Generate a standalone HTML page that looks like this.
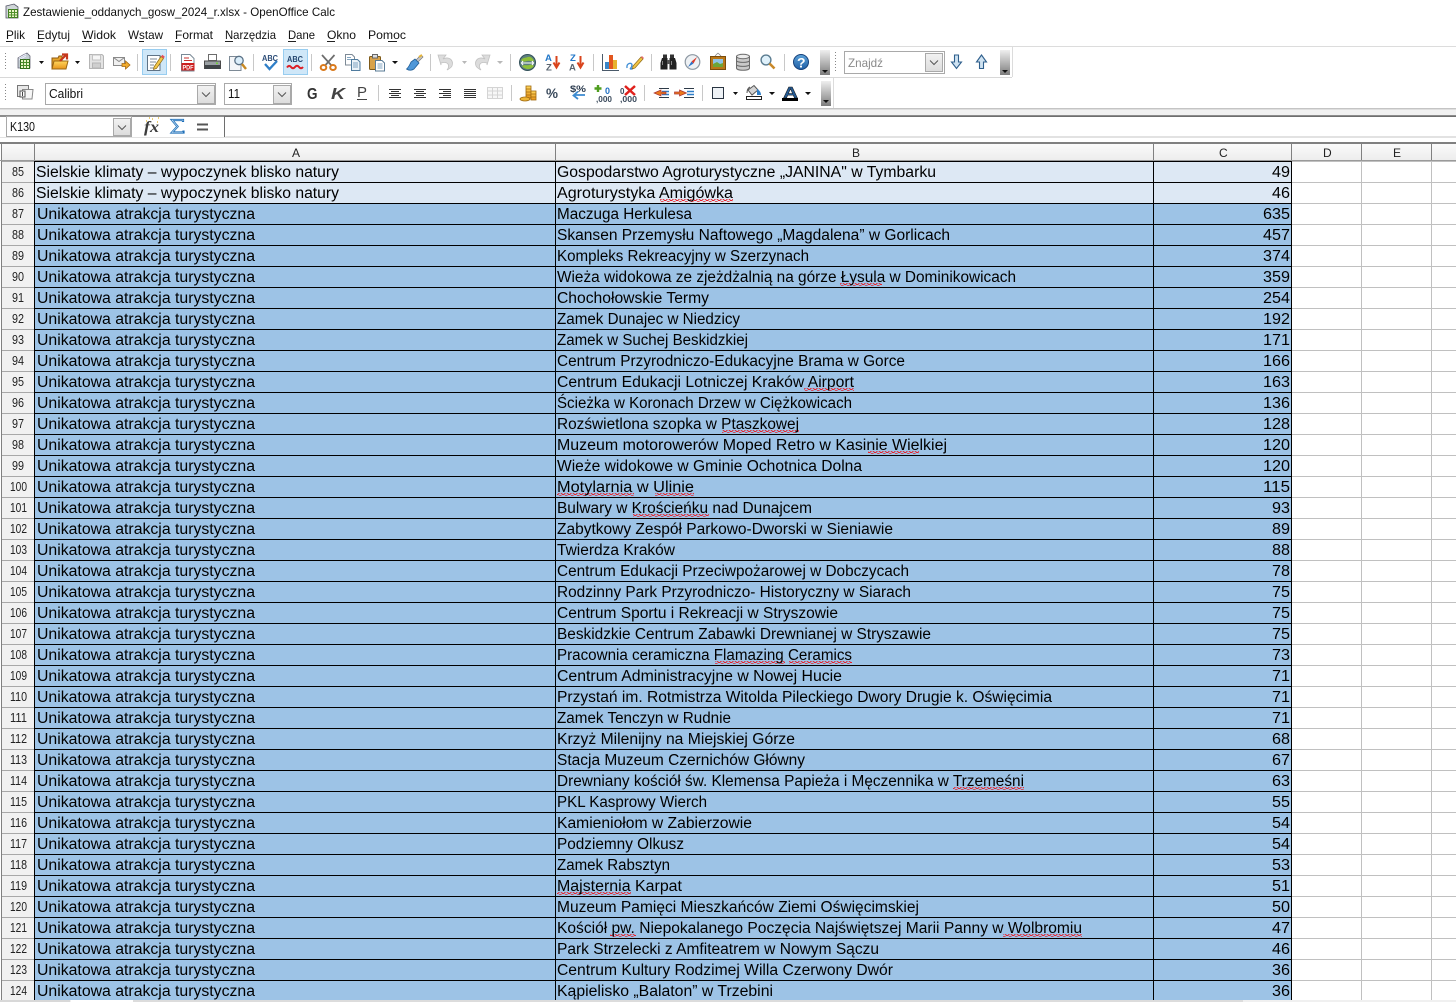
<!DOCTYPE html>
<html lang="pl"><head><meta charset="utf-8"><title>Zestawienie_oddanych_gosw_2024_r.xlsx - OpenOffice Calc</title>
<style>
html,body{margin:0;padding:0;background:#fff;overflow:hidden;width:1456px;height:1002px}
svg{display:block;font-family:"Liberation Sans",sans-serif}
.a,.b,.c{font-size:15.5px;fill:#000}
.n{font-size:13px;fill:#222}
.h{font-size:12px;fill:#222}
.u{font-size:12px;fill:#111}
</style></head><body>
<svg width="1456" height="1002" viewBox="0 0 1456 1002" xmlns="http://www.w3.org/2000/svg">
<defs>
<pattern id="sq" width="6" height="3" patternUnits="userSpaceOnUse"><path d="M0 2.500L1.500 .7L3 .7L4.500 2.500L6 2.500" fill="none" stroke="#e8202a" stroke-width="1"/></pattern>
<linearGradient id="hd" x1="0" y1="0" x2="0" y2="1"><stop offset="0" stop-color="#fafafa"/><stop offset="1" stop-color="#ececec"/></linearGradient>
<linearGradient id="hn" x1="0" y1="0" x2="0" y2="1"><stop offset="0" stop-color="#efefef"/><stop offset="1" stop-color="#7d7d7d"/></linearGradient>
<linearGradient id="gold" x1="0" y1="0" x2="0" y2="1"><stop offset="0" stop-color="#ffd75e"/><stop offset="1" stop-color="#e8951c"/></linearGradient>
<linearGradient id="blu" x1="0" y1="0" x2="0" y2="1"><stop offset="0" stop-color="#5da2d8"/><stop offset="1" stop-color="#1f5fa6"/></linearGradient>
<linearGradient id="btn" x1="0" y1="0" x2="0" y2="1"><stop offset="0" stop-color="#f2f2f2"/><stop offset="1" stop-color="#dcdcdc"/></linearGradient>
</defs>
<rect width="1456" height="1002" fill="#fff"/>

<!-- title bar -->
<g transform="translate(5,3)"><path d="M1 3L9 1L13 4V15H1z" fill="#cfd6d8" stroke="#556" stroke-width=".8"/><rect x="3.500" y="6.500" width="9" height="8" fill="#eaf4c8" stroke="#3f7d20"/><path d="M3.500 9.500H12.500M3.500 12H12.500M6.500 6.500V14.500M9.500 6.500V14.500" stroke="#4f8f2b" fill="none"/></g>
<text class="u" x="23" y="16" textLength="312" lengthAdjust="spacingAndGlyphs">Zestawienie_oddanych_gosw_2024_r.xlsx - OpenOffice Calc</text>

<!-- menu -->
<text class="u" x="6" y="39" textLength="19" lengthAdjust="spacingAndGlyphs">Plik</text>
<text class="u" x="37" y="39" textLength="33" lengthAdjust="spacingAndGlyphs">Edytuj</text>
<text class="u" x="82" y="39" textLength="34" lengthAdjust="spacingAndGlyphs">Widok</text>
<text class="u" x="128" y="39" textLength="35" lengthAdjust="spacingAndGlyphs">Wstaw</text>
<text class="u" x="175" y="39" textLength="38" lengthAdjust="spacingAndGlyphs">Format</text>
<text class="u" x="225" y="39" textLength="51" lengthAdjust="spacingAndGlyphs">Narzędzia</text>
<text class="u" x="288" y="39" textLength="27" lengthAdjust="spacingAndGlyphs">Dane</text>
<text class="u" x="327" y="39" textLength="29" lengthAdjust="spacingAndGlyphs">Okno</text>
<text class="u" x="368" y="39" textLength="38" lengthAdjust="spacingAndGlyphs">Pomoc</text>
<path d="M6 41.500h7M37 41.500h6M82 41.500h10M139 41.500h5M175 41.500h6M225 41.500h8M288 41.500h8M327 41.500h8M388 41.500h9" stroke="#222" shape-rendering="crispEdges"/>

<!-- toolbar frame -->
<g shape-rendering="crispEdges" fill="none">
<path d="M0 46.500H1456" stroke="#dcdcdc"/>
<path d="M0 77.500H1012" stroke="#d8d8d8"/>
<path d="M1012.500 47V77" stroke="#dcdcdc"/>
<path d="M833.500 78V108" stroke="#dcdcdc"/>
<path d="M0 108.500H1456" stroke="#c4c4c4"/>
<path d="M0 109.500H1456" stroke="#dedede"/>
</g>
<rect y="110" width="1456" height="5" fill="#f1f1f1"/>
<rect y="115" width="1456" height="2" fill="#8c8c8c"/>
<path d="M0 137.500H1456" stroke="#e2e2e2" shape-rendering="crispEdges"/>
<rect y="142" width="1456" height="2" fill="#808080"/>

<!-- grips -->
<g stroke="#888" stroke-dasharray="1 2" shape-rendering="crispEdges">
<path d="M5.500 53V71"/><path d="M5.500 84V102"/><path d="M835.500 52V72"/>
</g>

<!-- separators -->
<g stroke="#c8c8c8" shape-rendering="crispEdges">
<path d="M137.500 54V71M170.500 54V71M253.500 54V71M311.500 54V71M430.500 54V71M510.500 54V71M593.500 54V71M651.500 54V71M784.500 54V71"/>
<path d="M378.500 85V101M511.500 85V101M644.500 85V101M702.500 85V101"/>
</g>

<!-- highlighted buttons -->
<rect x="142.500" y="49.500" width="24" height="25" fill="#cfe7f8" stroke="#98cdf0"/>
<rect x="283.500" y="49.500" width="24" height="25" fill="#cfe7f8" stroke="#98cdf0"/>

<!-- dropdown arrows -->
<g fill="#111">
<path d="M39 61h5l-2.500 3zM75 61h5l-2.500 3zM392 61h6l-3 3zM733 92h5l-2.500 3zM769 92h6l-3 3zM805 92h6l-3 3z"/>
</g>
<g fill="#b8b8b8"><path d="M462 61h5l-2.500 3zM497 61h6l-3 3z"/></g>

<!-- new doc -->
<g transform="translate(17,53)"><path d="M1 5L6 2 10 0 13 3V15H1z" fill="#c3cdd2" stroke="#667" stroke-width=".8"/><path d="M2 5L9 1M2 7L9 3" stroke="#eef" stroke-width=".8"/><rect x="3.500" y="6.500" width="9" height="9" fill="#e9f3c5" stroke="#2f6a18"/><path d="M3.500 9.500H12.500M3.500 12.500H12.500M6.500 6.500V15.500M9.500 6.500V15.500" stroke="#4a8a28"/></g>
<!-- open -->
<g transform="translate(51,53)"><path d="M1 5H7L8 3H11V15H1z" fill="#e6a52b" stroke="#8f5a10"/><path d="M1 16L3 8H17L15 16z" fill="url(#gold)" stroke="#9a6512"/><path d="M9 8L15 2M11 1.500H16V6.500" fill="none" stroke="#c6371d" stroke-width="2.200"/></g>
<!-- save (disabled) -->
<g transform="translate(89,54)"><path d="M.5.500H13L14.500 2V14.500H.5z" fill="#e3e3e3" stroke="#b5b5b5"/><rect x="3.500" y="1" width="8" height="5" fill="#f6f6f6" stroke="#c2c2c2"/><rect x="3.500" y="9" width="8" height="5" fill="#cfcfcf" stroke="#b5b5b5"/></g>
<!-- mail -->
<g transform="translate(113,57)"><rect x=".5" y=".5" width="11" height="8" fill="#f0f0f0" stroke="#8a8a8a"/><path d="M.5.500L6 4.500L11.500.5" fill="none" stroke="#8a8a8a"/><path d="M9 6.500H12.500V4L17 8L12.500 12V9.500H9z" fill="#f2ac2e" stroke="#a66a12" stroke-width=".8"/></g>
<!-- edit -->
<g transform="translate(147,53)"><path d="M.5 2.500H13V17.500H.5z" fill="#fff" stroke="#5f7386"/><path d="M3 6H10M3 9H9M3 12H7M3 15H7" stroke="#7d8a96"/><path d="M7 14L14 3.500L16.500 5.500L9.500 15.500L6.500 16.500z" fill="#f4c84a" stroke="#8b6914" stroke-width=".7"/><path d="M14 3.500L15.300 1.700L17.800 3.700L16.500 5.500z" fill="#e8505a"/></g>
<!-- pdf -->
<g transform="translate(181,54)"><path d="M.5.500H9L13 4.500V17H.5z" fill="#fff" stroke="#7a8a96"/><path d="M3 4H8M3 6.500H11" stroke="#c9302c"/><rect x=".5" y="9" width="13" height="7.500" fill="#cc1f1f"/><text x="1.500" y="15.300" font-size="6.500" font-weight="bold" fill="#fff" textLength="11" lengthAdjust="spacingAndGlyphs">PDF</text></g>
<!-- print -->
<g transform="translate(204,54)"><rect x="4.500" y=".5" width="8" height="6" fill="#fff" stroke="#6c6c6c"/><path d="M.5 7H16.500V14.500H.5z" fill="#9aa0a4" stroke="#4a4a4a"/><rect x="1" y="11" width="15" height="4" fill="#3f4448"/><rect x="12" y="8.500" width="2" height="1.500" fill="#6fcf3a"/></g>
<!-- preview -->
<g transform="translate(229,54)"><path d="M.5 2.500H9L12 5.500V16.500H.5z" fill="#f4f6f8" stroke="#7d8a96"/><circle cx="10" cy="6.500" r="4.200" fill="#dbeefa" stroke="#5a7186" stroke-width="1.300"/><path d="M13 10L17 15" stroke="#c98a23" stroke-width="2.400"/></g>
<!-- spell -->
<g transform="translate(262,53)"><text x="0" y="7.800" font-size="8.500" font-weight="bold" fill="#2c4d78" textLength="16" lengthAdjust="spacingAndGlyphs">ABC</text><path d="M3 11L7.500 16L15 8" fill="none" stroke="#2f7fc8" stroke-width="2.300"/></g>
<!-- autospell -->
<g transform="translate(287,54)"><text x="0" y="8" font-size="8.500" font-weight="bold" fill="#24466f" textLength="16" lengthAdjust="spacingAndGlyphs">ABC</text><path d="M0 13.500Q2 10.500 4 13Q6 15.500 8 13Q10 10.500 12 13Q14 15.500 16 13" fill="none" stroke="#dc1f26" stroke-width="2"/></g>
<!-- scissors -->
<g transform="translate(320,54)" fill="none"><path d="M2 1L11 11M14.500 1L5.500 11" stroke="#6d6d6d" stroke-width="1.700"/><ellipse cx="3.500" cy="13.500" rx="2.800" ry="2.500" stroke="#d9791b" stroke-width="2"/><ellipse cx="13" cy="13.500" rx="2.800" ry="2.500" stroke="#d9791b" stroke-width="2"/></g>
<!-- copy -->
<g transform="translate(345,54)"><path d="M.5.500H7L9.500 3V11H.5z" fill="#fff" stroke="#7d8a96"/><path d="M6.500 5.500H12.500L15 8V16.500H6.500z" fill="#eaf2f8" stroke="#4f7b9e"/><path d="M8 9H13M8 11H13M8 13H13M2 3.500H6M2 5.500H6" stroke="#5a88ad" stroke-width=".8"/></g>
<!-- paste -->
<g transform="translate(369,54)"><rect x=".5" y="2.500" width="11" height="13" rx="1" fill="#d8a24a" stroke="#7f5a18"/><rect x="3.500" y=".5" width="5" height="3.500" fill="#ddd" stroke="#666"/><path d="M6.500 6.500H13L15.500 9V17H6.500z" fill="#fff" stroke="#5a7b96"/><path d="M8.500 10H13.500M8.500 12H13.500M8.500 14H13.500" stroke="#5a88ad" stroke-width=".8"/></g>
<!-- brush -->
<g transform="translate(406,54)"><path d="M10 6L15 1L17 3L12 8z" fill="#c7c7c7" stroke="#777" stroke-width=".7"/><path d="M9 5L13 9L8 15C5 17 2 16 .5 15C3 13 4 10 5 8z" fill="#4f97d8" stroke="#1e5c96" stroke-width=".8"/><path d="M13 3L16 1" stroke="#e4b43a" stroke-width="2"/></g>
<!-- undo/redo disabled -->
<path d="M438 55L446 55L443 59C449 56 454 60 452 66C451 68 449 69 447 70C450 66 449 61 441 63V65z" fill="#dcdcdc" stroke="#c2c2c2" stroke-width=".8"/>
<path d="M490 55L482 55L485 59C479 56 474 60 476 66C477 68 479 69 481 70C478 66 479 61 487 63V65z" fill="#dcdcdc" stroke="#c2c2c2" stroke-width=".8"/>
<!-- navigator globe -->
<g transform="translate(519,54)"><circle cx="8.500" cy="8.500" r="8" fill="#5d7f7d" stroke="#34525a"/><path d="M2 6C5 3 7 4 9 3S14 4 15 7C12 8 11 6 8 7S3 8 2 6z" fill="#8fc038"/><path d="M3 12C6 10 8 12 10 11S14 11 15 12C12 16 6 16 3 12z" fill="#8fc038"/><path d="M3.500 9H14M4 11L2.500 9L4 7M13 11L14.500 9L13 7" fill="none" stroke="#fff" stroke-width="1.100"/></g>
<!-- sort AZ -->
<g transform="translate(545,53)"><text x="0" y="8" font-size="9.500" font-weight="bold" fill="#2277c9">A</text><text x="1" y="17.500" font-size="9.500" font-weight="bold" fill="#5a6470">Z</text><path d="M11.500 3V13M8.500 9.500L11.500 14.500L14.500 9.500" fill="none" stroke="#d9441d" stroke-width="2"/></g>
<g transform="translate(569,53)"><text x="1" y="8" font-size="9.500" font-weight="bold" fill="#2277c9">Z</text><text x="0" y="17.500" font-size="9.500" font-weight="bold" fill="#5a6470">A</text><path d="M11.500 3V13M8.500 9.500L11.500 14.500L14.500 9.500" fill="none" stroke="#d9441d" stroke-width="2"/></g>
<!-- chart -->
<g transform="translate(602,53)"><path d="M.5 1V17.500H17" fill="none" stroke="#4a5a6a"/><rect x="3" y="9" width="4" height="7" fill="#3a86c8"/><rect x="7" y="2" width="4" height="14" fill="#e2561e"/><rect x="11" y="7" width="4" height="9" fill="#e8b22c"/></g>
<!-- draw -->
<g transform="translate(626,54)"><path d="M1 14C0 9 6 8 6 11S3 15 5 15 9 12 9 11" fill="none" stroke="#3f8ed6" stroke-width="1.400"/><path d="M7 12L15 3L17 5L9 14L6.500 15z" fill="#f1c445" stroke="#8b6914" stroke-width=".7"/><path d="M15 3L16 2L18 4L17 5z" fill="#e86a70"/></g>
<!-- binoculars -->
<g transform="translate(660,54)"><rect x="3" y=".5" width="4" height="4" fill="#333"/><rect x="10" y=".5" width="4" height="4" fill="#333"/><path d="M2 4H7.500V15.500H.5V9z" fill="#222"/><path d="M9.500 4H15L16.500 9V15.500H9.500z" fill="#222"/><rect x="7" y="6" width="3" height="4" fill="#555"/><path d="M2.500 7V11M11.500 7V11" stroke="#888"/></g>
<!-- compass -->
<g transform="translate(685,54)"><circle cx="7.500" cy="8" r="7.300" fill="#eef1f4" stroke="#8c97a2" stroke-width="1.200"/><path d="M12 3L8.500 9.500L6.500 7.500z" fill="#d93a2b"/><path d="M3 13L6.500 7.500L8.500 9.500z" fill="#2d72c4"/></g>
<!-- gallery -->
<g transform="translate(710,53)"><path d="M8 0L5 3M8 0L11 3" stroke="#888" fill="none" stroke-width=".8"/><rect x=".5" y="3.500" width="15" height="13" fill="#b97718" stroke="#7a4c0c"/><rect x="3" y="6" width="10" height="8" fill="#8fc4e8"/><path d="M3 14V11L7 9L10 11L13 10V14z" fill="#6ea536"/></g>
<!-- database -->
<g transform="translate(736,54)"><path d="M.5 2.500V14C.5 17 13.500 17 13.500 14V2.500z" fill="#c9c9c9" stroke="#6a6a6a"/><ellipse cx="7" cy="2.500" rx="6.500" ry="2.200" fill="#ececec" stroke="#6a6a6a"/><path d="M.5 6.500C.5 9 13.500 9 13.500 6.500M.5 10.500C.5 13 13.500 13 13.500 10.500" fill="none" stroke="#6a6a6a"/></g>
<!-- zoom -->
<g transform="translate(760,54)"><circle cx="6" cy="6" r="4.900" fill="#dff1fb" stroke="#5b7c90" stroke-width="1.400"/><path d="M9.500 9.500L14.500 14.500" stroke="#c9892a" stroke-width="2.600"/></g>
<!-- help -->
<circle cx="801" cy="62" r="7.500" fill="url(#blu)" stroke="#16407a"/>
<text x="797" y="67.500" font-size="14" font-weight="bold" fill="#fff">?</text>

<!-- handles -->
<g>
<rect x="820" y="50" width="10" height="25" fill="url(#hn)"/><path d="M822 70h6l-3 3z" fill="#111"/>
<rect x="821" y="81" width="10" height="25" fill="url(#hn)"/><path d="M823 100h6l-3 3z" fill="#111"/>
<rect x="1000" y="50" width="10" height="25" fill="url(#hn)"/><path d="M1002 70h6l-3 3z" fill="#111"/>
</g>

<!-- find box -->
<rect x="844.500" y="51.500" width="100" height="22" fill="#fff" stroke="#a9a9a9"/>
<text x="848" y="67" font-size="12" fill="#8a8a8a" textLength="35" lengthAdjust="spacingAndGlyphs">Znajdź</text>
<rect x="925.500" y="53.500" width="17" height="18" fill="url(#btn)" stroke="#a9a9a9"/>
<path d="M930 60.500L934 64.500L938 60.500" fill="none" stroke="#555"/>
<path d="M954.500 55H958.500V62H961.500L956.500 68.500L951.500 62H954.500z" fill="#cfe2f1" stroke="#2f5f8c" stroke-width="1.100"/>
<path d="M979.500 68.500H983.500V62H986.500L981.500 55L976.500 62H979.500z" fill="#cfe2f1" stroke="#2f5f8c" stroke-width="1.100"/>

<!-- formatting -->
<g transform="translate(17,85)"><rect x=".5" y=".5" width="11" height="11" fill="#e8e8e8" stroke="#777"/><path d="M5.500 4.500H16L15 14H5.500z" fill="#f6f6f6" stroke="#888"/><rect x="3" y="6" width="5" height="6" fill="#fff" stroke="#555"/><path d="M5.500 7V11" stroke="#444"/></g>

<rect x="45.500" y="83.500" width="170" height="21" fill="#fff" stroke="#a9a9a9"/>
<text x="49" y="98" font-size="12.500" fill="#111" textLength="34" lengthAdjust="spacingAndGlyphs">Calibri</text>
<rect x="197.500" y="85.500" width="17" height="18" fill="url(#btn)" stroke="#a9a9a9"/>
<path d="M202 92.500L206 96.500L210 92.500" fill="none" stroke="#555"/>
<rect x="224.500" y="83.500" width="67" height="21" fill="#fff" stroke="#a9a9a9"/>
<text x="228" y="98" font-size="12.500" fill="#111" textLength="12" lengthAdjust="spacingAndGlyphs">11</text>
<rect x="273.500" y="85.500" width="17" height="18" fill="url(#btn)" stroke="#a9a9a9"/>
<path d="M278 92.500L282 96.500L286 92.500" fill="none" stroke="#555"/>

<text x="307" y="99" font-size="16" font-weight="bold" fill="#333" textLength="10.500" lengthAdjust="spacingAndGlyphs">G</text>
<text x="331" y="99" font-size="16" font-weight="bold" font-style="italic" fill="#444" textLength="14" lengthAdjust="spacingAndGlyphs">K</text>
<text x="357" y="97" font-size="15" fill="#444" textLength="10" lengthAdjust="spacingAndGlyphs">P</text>
<path d="M357 99.500H367" stroke="#444" shape-rendering="crispEdges"/>

<!-- align -->
<g stroke="#333" shape-rendering="crispEdges">
<path d="M389 89.500H401M391 91.500H399M389 93.500H401M391 95.500H399M389 97.500H401"/>
<path d="M414 89.500H426M416 91.500H424M414 93.500H426M416 95.500H424M414 97.500H426"/>
<path d="M439 89.500H451M443 91.500H451M439 93.500H451M443 95.500H451M439 97.500H451"/>
<path d="M464 89.500H476M464 91.500H476M464 93.500H476M464 95.500H476M464 97.500H476"/>
</g>
<g stroke="#d4d4d4" fill="#f7f7f7" shape-rendering="crispEdges"><rect x="487.500" y="87.500" width="15" height="11"/><path d="M487.500 91H503M487.500 95H503M492.500 87.500V99M497.500 87.500V99" fill="none"/></g>

<!-- coins -->
<g transform="translate(520,85)"><rect x="6" y="1" width="5" height="12" fill="url(#gold)" stroke="#a06a10" stroke-width=".8"/><path d="M6 4H11M6 7H11M6 10H11" stroke="#a06a10" stroke-width=".7"/><rect x="11" y="6" width="5" height="9" fill="url(#gold)" stroke="#a06a10" stroke-width=".8"/><path d="M11 9H16M11 12H16" stroke="#a06a10" stroke-width=".7"/><ellipse cx="5" cy="14" rx="5" ry="2" fill="#eeb73a" stroke="#a06a10" stroke-width=".8"/></g>
<text x="546" y="98" font-size="14" font-weight="bold" fill="#3a4a5c" textLength="12" lengthAdjust="spacingAndGlyphs">%</text>
<text x="570" y="92" font-size="9.500" font-weight="bold" fill="#2d3d50" textLength="16" lengthAdjust="spacingAndGlyphs">$%</text>
<path d="M585 95H575M578 91.500L573.500 95.500L578 99" fill="none" stroke="#3b8ad0" stroke-width="1.800"/>
<path d="M598 85V92M594.500 88.500H601.500" stroke="#4f9e1f" stroke-width="2.400"/>
<text x="605" y="94" font-size="9" font-weight="bold" fill="#1e6ec2">0</text>
<text x="596" y="102" font-size="8" font-weight="bold" fill="#3b4a5c" textLength="16" lengthAdjust="spacingAndGlyphs">,000</text>
<path d="M625 86L635 95M635 86L625 95" stroke="#e0201c" stroke-width="2.500"/>
<text x="620" y="94" font-size="8" font-weight="bold" fill="#3b4a5c">0</text>
<text x="620" y="102" font-size="8" font-weight="bold" fill="#3b4a5c" textLength="17" lengthAdjust="spacingAndGlyphs">,000</text>

<!-- indent -->
<g shape-rendering="crispEdges" stroke="#2d3a48"><path d="M659 88.500H669M659 97.500H669M684 88.500H694M684 97.500H694"/></g>
<path d="M662 91.500H669M662 94.500H669M687 91.500H694M687 94.500H694" stroke="#2e7fc9" stroke-width="1.500"/>
<path d="M661 90L654 93L661 96V94H666V92H661z" fill="#ec7a1d" stroke="#a33" stroke-width=".7"/>
<path d="M680 90L687 93L680 96V94H675V92H680z" transform="translate(-.5,0)" fill="#ec7a1d" stroke="#a33" stroke-width=".7"/>

<!-- borders -->
<rect x="712.500" y="87.500" width="11" height="11" fill="#eef2f6" stroke="#2a3542"/>
<!-- fill -->
<g transform="translate(746,85)"><path d="M2 5L8 .5L12 5L6 10z" fill="#d4d4d4" stroke="#555"/><path d="M4 2C2 3 1 5 1 8" fill="none" stroke="#555"/><path d="M11 4C13 5 15 7 15 10H11z" fill="#2f7fc8"/><rect x=".5" y="11.500" width="15" height="3" fill="#fff" stroke="#222"/></g>
<!-- font color -->
<text x="783" y="98" font-size="16" font-weight="bold" fill="#255a92" stroke="#111" stroke-width=".4" textLength="15" lengthAdjust="spacingAndGlyphs">A</text>
<rect x="782" y="98" width="16" height="3" fill="#000"/>

<!-- formula bar -->
<rect x="6.500" y="116.500" width="125" height="20" fill="#fff" stroke="#a9a9a9"/>
<text x="10" y="131" font-size="12.500" fill="#111" textLength="25" lengthAdjust="spacingAndGlyphs">K130</text>
<rect x="113.500" y="118.500" width="17" height="17" fill="url(#btn)" stroke="#a9a9a9"/>
<path d="M118 125.500L122 129.500L126 125.500" fill="none" stroke="#555"/>
<text x="144" y="132" font-size="16" font-weight="bold" font-style="italic" font-family="Liberation Serif" fill="#3c3c3c" textLength="15" lengthAdjust="spacingAndGlyphs">fx</text>
<path d="M146 121h1M152 119h1M157 122h1M158 118h1M149 118h1" stroke="#e0b020" stroke-width="1.300"/>
<path d="M183 122V120H172L177.500 126.500L172 132.500H183.500V130.500" fill="none" stroke="#1f6fb8" stroke-width="2.200"/>
<path d="M183 121V120H172L177.500 126.500L172 132.500H183" fill="none" stroke="#cfe6f8" stroke-width=".6"/>
<path d="M197 124.500H208M197 129.500H208" stroke="#555" stroke-width="1.600" shape-rendering="crispEdges"/>
<path d="M224.500 137V116.500H1456" fill="none" stroke="#6e6e6e" shape-rendering="crispEdges"/>
<path d="M225.500 136.500H1456" stroke="#e2e2e2" shape-rendering="crispEdges"/>

<!-- sheet -->
<rect x="1" y="144" width="1455" height="17" fill="url(#hd)"/>
<rect x="1" y="161" width="33" height="839" fill="#f1f1f1"/>
<rect x="35" y="162" width="1256" height="41" fill="#dde8f4"/>
<rect x="35" y="203" width="1256" height="797" fill="#9dc3e6"/>

<g shape-rendering="crispEdges" fill="none">
<path stroke="#a8a8a8" d="M1 161.500H34M1 182.500H34M1 203.500H34M1 224.500H34M1 245.500H34M1 266.500H34M1 287.500H34M1 308.500H34M1 329.500H34M1 350.500H34M1 371.500H34M1 392.500H34M1 413.500H34M1 434.500H34M1 455.500H34M1 476.500H34M1 497.500H34M1 518.500H34M1 539.500H34M1 560.500H34M1 581.500H34M1 602.500H34M1 623.500H34M1 644.500H34M1 665.500H34M1 686.500H34M1 707.500H34M1 728.500H34M1 749.500H34M1 770.500H34M1 791.500H34M1 812.500H34M1 833.500H34M1 854.500H34M1 875.500H34M1 896.500H34M1 917.500H34M1 938.500H34M1 959.500H34M1 980.500H34"/>
<path stroke="#000" d="M34 161.500H1292M34 182.500H1292M34 203.500H1292M34 224.500H1292M34 245.500H1292M34 266.500H1292M34 287.500H1292M34 308.500H1292M34 329.500H1292M34 350.500H1292M34 371.500H1292M34 392.500H1292M34 413.500H1292M34 434.500H1292M34 455.500H1292M34 476.500H1292M34 497.500H1292M34 518.500H1292M34 539.500H1292M34 560.500H1292M34 581.500H1292M34 602.500H1292M34 623.500H1292M34 644.500H1292M34 665.500H1292M34 686.500H1292M34 707.500H1292M34 728.500H1292M34 749.500H1292M34 770.500H1292M34 791.500H1292M34 812.500H1292M34 833.500H1292M34 854.500H1292M34 875.500H1292M34 896.500H1292M34 917.500H1292M34 938.500H1292M34 959.500H1292M34 980.500H1292"/>
<path stroke="#c0c0c0" d="M1292 161.500H1456M1292 182.500H1456M1292 203.500H1456M1292 224.500H1456M1292 245.500H1456M1292 266.500H1456M1292 287.500H1456M1292 308.500H1456M1292 329.500H1456M1292 350.500H1456M1292 371.500H1456M1292 392.500H1456M1292 413.500H1456M1292 434.500H1456M1292 455.500H1456M1292 476.500H1456M1292 497.500H1456M1292 518.500H1456M1292 539.500H1456M1292 560.500H1456M1292 581.500H1456M1292 602.500H1456M1292 623.500H1456M1292 644.500H1456M1292 665.500H1456M1292 686.500H1456M1292 707.500H1456M1292 728.500H1456M1292 749.500H1456M1292 770.500H1456M1292 791.500H1456M1292 812.500H1456M1292 833.500H1456M1292 854.500H1456M1292 875.500H1456M1292 896.500H1456M1292 917.500H1456M1292 938.500H1456M1292 959.500H1456M1292 980.500H1456"/>
<path stroke="#000" d="M34.500 161V1000M555.500 161V1000M1153.500 161V1000M1291.500 161V1000"/>
<path stroke="#c0c0c0" d="M1361.500 161V1000M1431.500 161V1000"/>
<path stroke="#808080" d="M34.500 144V161M555.500 144V161M1153.500 144V161M1291.500 144V161M1361.500 144V161M1431.500 144V161"/>
<path stroke="#808080" d="M1.500 143V1000"/>
<path stroke="#9a9a9a" d="M0 160.500H1456"/>
</g>

<!-- col headers -->
<text class="h" x="292" y="157">A</text><text class="h" x="852" y="157">B</text><text class="h" x="1219" y="157">C</text><text class="h" x="1323" y="157">D</text><text class="h" x="1393" y="157">E</text>

<!-- squiggles -->
<g fill="url(#sq)">
<rect x="660" y="199" width="73" height="3"/>
<rect x="840" y="283" width="42" height="3"/>
<rect x="804" y="388" width="50" height="3"/>
<rect x="722" y="430" width="77" height="3"/>
<rect x="868" y="451" width="51" height="3"/>
<rect x="557" y="493" width="77" height="3"/>
<rect x="655" y="493" width="39" height="3"/>
<rect x="633" y="514" width="76" height="3"/>
<rect x="715" y="661" width="70" height="3"/>
<rect x="789" y="661" width="63" height="3"/>
<rect x="953" y="787" width="71" height="3"/>
<rect x="557" y="892" width="74" height="3"/>
<rect x="610" y="934" width="26" height="3"/>
<rect x="1003" y="934" width="79" height="3"/>
</g>

<!-- rows -->
<text class="n" x="12" y="176" textLength="12" lengthAdjust="spacingAndGlyphs">85</text><text class="a" x="36" y="177" textLength="303" lengthAdjust="spacingAndGlyphs">Sielskie klimaty – wypoczynek blisko natury</text><text class="b" x="557" y="177" textLength="379" lengthAdjust="spacingAndGlyphs">Gospodarstwo Agroturystyczne „JANINA" w Tymbarku</text><text class="c" x="1272" y="177" textLength="18" lengthAdjust="spacingAndGlyphs">49</text>
<text class="n" x="12" y="197" textLength="12" lengthAdjust="spacingAndGlyphs">86</text><text class="a" x="36" y="198" textLength="303" lengthAdjust="spacingAndGlyphs">Sielskie klimaty – wypoczynek blisko natury</text><text class="b" x="557" y="198" textLength="176" lengthAdjust="spacingAndGlyphs">Agroturystyka Amigówka</text><text class="c" x="1272" y="198" textLength="18" lengthAdjust="spacingAndGlyphs">46</text>
<text class="n" x="12" y="218" textLength="12" lengthAdjust="spacingAndGlyphs">87</text><text class="a" x="37" y="219" textLength="218" lengthAdjust="spacingAndGlyphs">Unikatowa atrakcja turystyczna</text><text class="b" x="557" y="219" textLength="135" lengthAdjust="spacingAndGlyphs">Maczuga Herkulesa</text><text class="c" x="1263" y="219" textLength="27" lengthAdjust="spacingAndGlyphs">635</text>
<text class="n" x="12" y="239" textLength="12" lengthAdjust="spacingAndGlyphs">88</text><text class="a" x="37" y="240" textLength="218" lengthAdjust="spacingAndGlyphs">Unikatowa atrakcja turystyczna</text><text class="b" x="557" y="240" textLength="393" lengthAdjust="spacingAndGlyphs">Skansen Przemysłu Naftowego „Magdalena” w Gorlicach</text><text class="c" x="1263" y="240" textLength="27" lengthAdjust="spacingAndGlyphs">457</text>
<text class="n" x="12" y="260" textLength="12" lengthAdjust="spacingAndGlyphs">89</text><text class="a" x="37" y="261" textLength="218" lengthAdjust="spacingAndGlyphs">Unikatowa atrakcja turystyczna</text><text class="b" x="557" y="261" textLength="252" lengthAdjust="spacingAndGlyphs">Kompleks Rekreacyjny w Szerzynach</text><text class="c" x="1263" y="261" textLength="27" lengthAdjust="spacingAndGlyphs">374</text>
<text class="n" x="12" y="281" textLength="12" lengthAdjust="spacingAndGlyphs">90</text><text class="a" x="37" y="282" textLength="218" lengthAdjust="spacingAndGlyphs">Unikatowa atrakcja turystyczna</text><text class="b" x="557" y="282" textLength="459" lengthAdjust="spacingAndGlyphs">Wieża widokowa ze zjeżdżalnią na górze Łysula w Dominikowicach</text><text class="c" x="1263" y="282" textLength="27" lengthAdjust="spacingAndGlyphs">359</text>
<text class="n" x="12" y="302" textLength="12" lengthAdjust="spacingAndGlyphs">91</text><text class="a" x="37" y="303" textLength="218" lengthAdjust="spacingAndGlyphs">Unikatowa atrakcja turystyczna</text><text class="b" x="557" y="303" textLength="152" lengthAdjust="spacingAndGlyphs">Chochołowskie Termy</text><text class="c" x="1263" y="303" textLength="27" lengthAdjust="spacingAndGlyphs">254</text>
<text class="n" x="12" y="323" textLength="12" lengthAdjust="spacingAndGlyphs">92</text><text class="a" x="37" y="324" textLength="218" lengthAdjust="spacingAndGlyphs">Unikatowa atrakcja turystyczna</text><text class="b" x="557" y="324" textLength="183" lengthAdjust="spacingAndGlyphs">Zamek Dunajec w Niedzicy</text><text class="c" x="1263" y="324" textLength="27" lengthAdjust="spacingAndGlyphs">192</text>
<text class="n" x="12" y="344" textLength="12" lengthAdjust="spacingAndGlyphs">93</text><text class="a" x="37" y="345" textLength="218" lengthAdjust="spacingAndGlyphs">Unikatowa atrakcja turystyczna</text><text class="b" x="557" y="345" textLength="191" lengthAdjust="spacingAndGlyphs">Zamek w Suchej Beskidzkiej</text><text class="c" x="1263" y="345" textLength="27" lengthAdjust="spacingAndGlyphs">171</text>
<text class="n" x="12" y="365" textLength="12" lengthAdjust="spacingAndGlyphs">94</text><text class="a" x="37" y="366" textLength="218" lengthAdjust="spacingAndGlyphs">Unikatowa atrakcja turystyczna</text><text class="b" x="557" y="366" textLength="348" lengthAdjust="spacingAndGlyphs">Centrum Przyrodniczo-Edukacyjne Brama w Gorce</text><text class="c" x="1263" y="366" textLength="27" lengthAdjust="spacingAndGlyphs">166</text>
<text class="n" x="12" y="386" textLength="12" lengthAdjust="spacingAndGlyphs">95</text><text class="a" x="37" y="387" textLength="218" lengthAdjust="spacingAndGlyphs">Unikatowa atrakcja turystyczna</text><text class="b" x="557" y="387" textLength="297" lengthAdjust="spacingAndGlyphs">Centrum Edukacji Lotniczej Kraków Airport</text><text class="c" x="1263" y="387" textLength="27" lengthAdjust="spacingAndGlyphs">163</text>
<text class="n" x="12" y="407" textLength="12" lengthAdjust="spacingAndGlyphs">96</text><text class="a" x="37" y="408" textLength="218" lengthAdjust="spacingAndGlyphs">Unikatowa atrakcja turystyczna</text><text class="b" x="557" y="408" textLength="295" lengthAdjust="spacingAndGlyphs">Ścieżka w Koronach Drzew w Ciężkowicach</text><text class="c" x="1263" y="408" textLength="27" lengthAdjust="spacingAndGlyphs">136</text>
<text class="n" x="12" y="428" textLength="12" lengthAdjust="spacingAndGlyphs">97</text><text class="a" x="37" y="429" textLength="218" lengthAdjust="spacingAndGlyphs">Unikatowa atrakcja turystyczna</text><text class="b" x="557" y="429" textLength="242" lengthAdjust="spacingAndGlyphs">Rozświetlona szopka w Ptaszkowej</text><text class="c" x="1263" y="429" textLength="27" lengthAdjust="spacingAndGlyphs">128</text>
<text class="n" x="12" y="449" textLength="12" lengthAdjust="spacingAndGlyphs">98</text><text class="a" x="37" y="450" textLength="218" lengthAdjust="spacingAndGlyphs">Unikatowa atrakcja turystyczna</text><text class="b" x="557" y="450" textLength="390" lengthAdjust="spacingAndGlyphs">Muzeum motorowerów Moped Retro w Kasinie Wielkiej</text><text class="c" x="1263" y="450" textLength="27" lengthAdjust="spacingAndGlyphs">120</text>
<text class="n" x="12" y="470" textLength="12" lengthAdjust="spacingAndGlyphs">99</text><text class="a" x="37" y="471" textLength="218" lengthAdjust="spacingAndGlyphs">Unikatowa atrakcja turystyczna</text><text class="b" x="557" y="471" textLength="305" lengthAdjust="spacingAndGlyphs">Wieże widokowe w Gminie Ochotnica Dolna</text><text class="c" x="1263" y="471" textLength="27" lengthAdjust="spacingAndGlyphs">120</text>
<text class="n" x="10" y="491" textLength="17" lengthAdjust="spacingAndGlyphs">100</text><text class="a" x="37" y="492" textLength="218" lengthAdjust="spacingAndGlyphs">Unikatowa atrakcja turystyczna</text><text class="b" x="557" y="492" textLength="137" lengthAdjust="spacingAndGlyphs">Motylarnia w Ulinie</text><text class="c" x="1263" y="492" textLength="27" lengthAdjust="spacingAndGlyphs">115</text>
<text class="n" x="10" y="512" textLength="17" lengthAdjust="spacingAndGlyphs">101</text><text class="a" x="37" y="513" textLength="218" lengthAdjust="spacingAndGlyphs">Unikatowa atrakcja turystyczna</text><text class="b" x="557" y="513" textLength="255" lengthAdjust="spacingAndGlyphs">Bulwary w Krościeńku nad Dunajcem</text><text class="c" x="1272" y="513" textLength="18" lengthAdjust="spacingAndGlyphs">93</text>
<text class="n" x="10" y="533" textLength="17" lengthAdjust="spacingAndGlyphs">102</text><text class="a" x="37" y="534" textLength="218" lengthAdjust="spacingAndGlyphs">Unikatowa atrakcja turystyczna</text><text class="b" x="557" y="534" textLength="336" lengthAdjust="spacingAndGlyphs">Zabytkowy Zespół Parkowo-Dworski w Sieniawie</text><text class="c" x="1272" y="534" textLength="18" lengthAdjust="spacingAndGlyphs">89</text>
<text class="n" x="10" y="554" textLength="17" lengthAdjust="spacingAndGlyphs">103</text><text class="a" x="37" y="555" textLength="218" lengthAdjust="spacingAndGlyphs">Unikatowa atrakcja turystyczna</text><text class="b" x="557" y="555" textLength="118" lengthAdjust="spacingAndGlyphs">Twierdza Kraków</text><text class="c" x="1272" y="555" textLength="18" lengthAdjust="spacingAndGlyphs">88</text>
<text class="n" x="10" y="575" textLength="17" lengthAdjust="spacingAndGlyphs">104</text><text class="a" x="37" y="576" textLength="218" lengthAdjust="spacingAndGlyphs">Unikatowa atrakcja turystyczna</text><text class="b" x="557" y="576" textLength="352" lengthAdjust="spacingAndGlyphs">Centrum Edukacji Przeciwpożarowej w Dobczycach</text><text class="c" x="1272" y="576" textLength="18" lengthAdjust="spacingAndGlyphs">78</text>
<text class="n" x="10" y="596" textLength="17" lengthAdjust="spacingAndGlyphs">105</text><text class="a" x="37" y="597" textLength="218" lengthAdjust="spacingAndGlyphs">Unikatowa atrakcja turystyczna</text><text class="b" x="557" y="597" textLength="354" lengthAdjust="spacingAndGlyphs">Rodzinny Park Przyrodniczo- Historyczny w Siarach</text><text class="c" x="1272" y="597" textLength="18" lengthAdjust="spacingAndGlyphs">75</text>
<text class="n" x="10" y="617" textLength="17" lengthAdjust="spacingAndGlyphs">106</text><text class="a" x="37" y="618" textLength="218" lengthAdjust="spacingAndGlyphs">Unikatowa atrakcja turystyczna</text><text class="b" x="557" y="618" textLength="281" lengthAdjust="spacingAndGlyphs">Centrum Sportu i Rekreacji w Stryszowie</text><text class="c" x="1272" y="618" textLength="18" lengthAdjust="spacingAndGlyphs">75</text>
<text class="n" x="10" y="638" textLength="17" lengthAdjust="spacingAndGlyphs">107</text><text class="a" x="37" y="639" textLength="218" lengthAdjust="spacingAndGlyphs">Unikatowa atrakcja turystyczna</text><text class="b" x="557" y="639" textLength="374" lengthAdjust="spacingAndGlyphs">Beskidzkie Centrum Zabawki Drewnianej w Stryszawie</text><text class="c" x="1272" y="639" textLength="18" lengthAdjust="spacingAndGlyphs">75</text>
<text class="n" x="10" y="659" textLength="17" lengthAdjust="spacingAndGlyphs">108</text><text class="a" x="37" y="660" textLength="218" lengthAdjust="spacingAndGlyphs">Unikatowa atrakcja turystyczna</text><text class="b" x="557" y="660" textLength="295" lengthAdjust="spacingAndGlyphs">Pracownia ceramiczna Flamazing Ceramics</text><text class="c" x="1272" y="660" textLength="18" lengthAdjust="spacingAndGlyphs">73</text>
<text class="n" x="10" y="680" textLength="17" lengthAdjust="spacingAndGlyphs">109</text><text class="a" x="37" y="681" textLength="218" lengthAdjust="spacingAndGlyphs">Unikatowa atrakcja turystyczna</text><text class="b" x="557" y="681" textLength="285" lengthAdjust="spacingAndGlyphs">Centrum Administracyjne w Nowej Hucie</text><text class="c" x="1272" y="681" textLength="18" lengthAdjust="spacingAndGlyphs">71</text>
<text class="n" x="10" y="701" textLength="17" lengthAdjust="spacingAndGlyphs">110</text><text class="a" x="37" y="702" textLength="218" lengthAdjust="spacingAndGlyphs">Unikatowa atrakcja turystyczna</text><text class="b" x="557" y="702" textLength="495" lengthAdjust="spacingAndGlyphs">Przystań im. Rotmistrza Witolda Pileckiego Dwory Drugie k. Oświęcimia</text><text class="c" x="1272" y="702" textLength="18" lengthAdjust="spacingAndGlyphs">71</text>
<text class="n" x="10" y="722" textLength="17" lengthAdjust="spacingAndGlyphs">111</text><text class="a" x="37" y="723" textLength="218" lengthAdjust="spacingAndGlyphs">Unikatowa atrakcja turystyczna</text><text class="b" x="557" y="723" textLength="174" lengthAdjust="spacingAndGlyphs">Zamek Tenczyn w Rudnie</text><text class="c" x="1272" y="723" textLength="18" lengthAdjust="spacingAndGlyphs">71</text>
<text class="n" x="10" y="743" textLength="17" lengthAdjust="spacingAndGlyphs">112</text><text class="a" x="37" y="744" textLength="218" lengthAdjust="spacingAndGlyphs">Unikatowa atrakcja turystyczna</text><text class="b" x="557" y="744" textLength="238" lengthAdjust="spacingAndGlyphs">Krzyż Milenijny na Miejskiej Górze</text><text class="c" x="1272" y="744" textLength="18" lengthAdjust="spacingAndGlyphs">68</text>
<text class="n" x="10" y="764" textLength="17" lengthAdjust="spacingAndGlyphs">113</text><text class="a" x="37" y="765" textLength="218" lengthAdjust="spacingAndGlyphs">Unikatowa atrakcja turystyczna</text><text class="b" x="557" y="765" textLength="248" lengthAdjust="spacingAndGlyphs">Stacja Muzeum Czernichów Główny</text><text class="c" x="1272" y="765" textLength="18" lengthAdjust="spacingAndGlyphs">67</text>
<text class="n" x="10" y="785" textLength="17" lengthAdjust="spacingAndGlyphs">114</text><text class="a" x="37" y="786" textLength="218" lengthAdjust="spacingAndGlyphs">Unikatowa atrakcja turystyczna</text><text class="b" x="557" y="786" textLength="467" lengthAdjust="spacingAndGlyphs">Drewniany kościół św. Klemensa Papieża i Męczennika w Trzemeśni</text><text class="c" x="1272" y="786" textLength="18" lengthAdjust="spacingAndGlyphs">63</text>
<text class="n" x="10" y="806" textLength="17" lengthAdjust="spacingAndGlyphs">115</text><text class="a" x="37" y="807" textLength="218" lengthAdjust="spacingAndGlyphs">Unikatowa atrakcja turystyczna</text><text class="b" x="557" y="807" textLength="150" lengthAdjust="spacingAndGlyphs">PKL Kasprowy Wierch</text><text class="c" x="1272" y="807" textLength="18" lengthAdjust="spacingAndGlyphs">55</text>
<text class="n" x="10" y="827" textLength="17" lengthAdjust="spacingAndGlyphs">116</text><text class="a" x="37" y="828" textLength="218" lengthAdjust="spacingAndGlyphs">Unikatowa atrakcja turystyczna</text><text class="b" x="557" y="828" textLength="195" lengthAdjust="spacingAndGlyphs">Kamieniołom w Zabierzowie</text><text class="c" x="1272" y="828" textLength="18" lengthAdjust="spacingAndGlyphs">54</text>
<text class="n" x="10" y="848" textLength="17" lengthAdjust="spacingAndGlyphs">117</text><text class="a" x="37" y="849" textLength="218" lengthAdjust="spacingAndGlyphs">Unikatowa atrakcja turystyczna</text><text class="b" x="557" y="849" textLength="127" lengthAdjust="spacingAndGlyphs">Podziemny Olkusz</text><text class="c" x="1272" y="849" textLength="18" lengthAdjust="spacingAndGlyphs">54</text>
<text class="n" x="10" y="869" textLength="17" lengthAdjust="spacingAndGlyphs">118</text><text class="a" x="37" y="870" textLength="218" lengthAdjust="spacingAndGlyphs">Unikatowa atrakcja turystyczna</text><text class="b" x="557" y="870" textLength="113" lengthAdjust="spacingAndGlyphs">Zamek Rabsztyn</text><text class="c" x="1272" y="870" textLength="18" lengthAdjust="spacingAndGlyphs">53</text>
<text class="n" x="10" y="890" textLength="17" lengthAdjust="spacingAndGlyphs">119</text><text class="a" x="37" y="891" textLength="218" lengthAdjust="spacingAndGlyphs">Unikatowa atrakcja turystyczna</text><text class="b" x="557" y="891" textLength="125" lengthAdjust="spacingAndGlyphs">Majsternia Karpat</text><text class="c" x="1272" y="891" textLength="18" lengthAdjust="spacingAndGlyphs">51</text>
<text class="n" x="10" y="911" textLength="17" lengthAdjust="spacingAndGlyphs">120</text><text class="a" x="37" y="912" textLength="218" lengthAdjust="spacingAndGlyphs">Unikatowa atrakcja turystyczna</text><text class="b" x="557" y="912" textLength="362" lengthAdjust="spacingAndGlyphs">Muzeum Pamięci Mieszkańców Ziemi Oświęcimskiej</text><text class="c" x="1272" y="912" textLength="18" lengthAdjust="spacingAndGlyphs">50</text>
<text class="n" x="10" y="932" textLength="17" lengthAdjust="spacingAndGlyphs">121</text><text class="a" x="37" y="933" textLength="218" lengthAdjust="spacingAndGlyphs">Unikatowa atrakcja turystyczna</text><text class="b" x="557" y="933" textLength="525" lengthAdjust="spacingAndGlyphs">Kościół pw. Niepokalanego Poczęcia Najświętszej Marii Panny w Wolbromiu</text><text class="c" x="1272" y="933" textLength="18" lengthAdjust="spacingAndGlyphs">47</text>
<text class="n" x="10" y="953" textLength="17" lengthAdjust="spacingAndGlyphs">122</text><text class="a" x="37" y="954" textLength="218" lengthAdjust="spacingAndGlyphs">Unikatowa atrakcja turystyczna</text><text class="b" x="557" y="954" textLength="322" lengthAdjust="spacingAndGlyphs">Park Strzelecki z Amfiteatrem w Nowym Sączu</text><text class="c" x="1272" y="954" textLength="18" lengthAdjust="spacingAndGlyphs">46</text>
<text class="n" x="10" y="974" textLength="17" lengthAdjust="spacingAndGlyphs">123</text><text class="a" x="37" y="975" textLength="218" lengthAdjust="spacingAndGlyphs">Unikatowa atrakcja turystyczna</text><text class="b" x="557" y="975" textLength="336" lengthAdjust="spacingAndGlyphs">Centrum Kultury Rodzimej Willa Czerwony Dwór</text><text class="c" x="1272" y="975" textLength="18" lengthAdjust="spacingAndGlyphs">36</text>
<text class="n" x="10" y="995" textLength="17" lengthAdjust="spacingAndGlyphs">124</text><text class="a" x="37" y="996" textLength="218" lengthAdjust="spacingAndGlyphs">Unikatowa atrakcja turystyczna</text><text class="b" x="557" y="996" textLength="216" lengthAdjust="spacingAndGlyphs">Kąpielisko „Balaton” w Trzebini</text><text class="c" x="1272" y="996" textLength="18" lengthAdjust="spacingAndGlyphs">36</text>

<!-- bottom strip -->
<rect y="1000" width="1456" height="2" fill="#f0f0f0"/>
<rect x="0" y="1000" width="70" height="2" fill="#d8d8d8"/>
<rect x="71" y="1000" width="62" height="2" fill="#fff"/>
<rect x="133" y="1000" width="1110" height="2" fill="#dcdcdc"/>
</svg>
</body></html>
